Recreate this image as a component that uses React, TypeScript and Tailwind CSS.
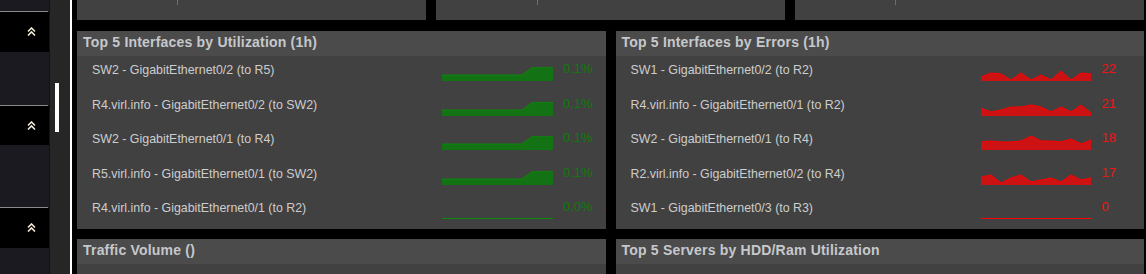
import React from "react";

type Row = { name: string; points: [number, number][]; value: string };

// sparkline points are [x, height-from-bottom] pairs, x runs 0..110
const greenRamp: [number, number][] = [
  [0, 6],
  [80, 6],
  [91, 14],
  [111, 14],
];
const flat: [number, number][] = [
  [0, 0],
  [111, 0],
];

const toPoints = (hs: number[]): [number, number][] =>
  hs.map((h, i) => [i * 10, h] as [number, number]);

const utilRows: Row[] = [
  { name: "SW2 - GigabitEthernet0/2 (to R5)", points: greenRamp, value: "0.1%" },
  { name: "R4.virl.info - GigabitEthernet0/2 (to SW2)", points: greenRamp, value: "0.1%" },
  { name: "SW2 - GigabitEthernet0/1 (to R4)", points: greenRamp, value: "0.1%" },
  { name: "R5.virl.info - GigabitEthernet0/1 (to SW2)", points: greenRamp, value: "0.1%" },
  { name: "R4.virl.info - GigabitEthernet0/1 (to R2)", points: flat, value: "0.0%" },
];

const errorRows: Row[] = [
  { name: "SW1 - GigabitEthernet0/2 (to R2)", points: toPoints([4, 8, 7, 1, 8, 1, 6, 1, 10, 1, 8, 7]), value: "22" },
  { name: "R4.virl.info - GigabitEthernet0/1 (to R2)", points: toPoints([8, 4, 6, 9, 9, 11, 9, 4, 9, 4, 11, 3]), value: "21" },
  { name: "SW2 - GigabitEthernet0/1 (to R4)", points: toPoints([8, 9, 8, 8, 9, 14, 9, 9, 8, 11, 6, 10]), value: "18" },
  { name: "R2.virl.info - GigabitEthernet0/2 (to R4)", points: toPoints([8, 10, 2, 7, 10, 3, 5, 7, 3, 10, 5, 7]), value: "17" },
  { name: "SW1 - GigabitEthernet0/3 (to R3)", points: flat, value: "0" },
];

function Spark({ points, fill, stroke }: { points: [number, number][]; fill: string; stroke: string }) {
  const H = 14;
  const line = points.map(([x, h]) => `${x},${Math.min(H - h, 13.5).toFixed(1)}`).join(" ");
  const last = points[points.length - 1][0];
  const area = `0,${H} ${line} ${last},${H}`;
  return (
    <svg width="111" height="14" viewBox="0 0 111 14" className="block mt-[11px] shrink-0">
      <polygon points={area} fill={fill} />
      <polyline points={line} fill="none" stroke={stroke} strokeWidth="1" />
    </svg>
  );
}

function Panel({ title, children }: { title: string; children?: React.ReactNode }) {
  return (
    <div className="bg-[#414141] flex flex-col h-full">
      <div className="h-[25px] bg-[#4b4b4b] flex items-center pl-[6px] pb-[2px] text-[14px] tracking-[0.2px] font-bold text-[#c6c8cb]">
        {title}
      </div>
      {children}
    </div>
  );
}

function TopList({ title, rows, fill, stroke, valueColor }: { title: string; rows: Row[]; fill: string; stroke: string; valueColor: string }) {
  return (
    <Panel title={title}>
      <div className="flex flex-col">
        {rows.map((r, i) => (
          <div key={i} className="h-[34.6px] flex pl-[15px]">
            <div className="w-[350px] pt-[6px] leading-[16px] text-[12.4px] text-[#cdcdcd]">{r.name}</div>
            <Spark points={r.points} fill={fill} stroke={stroke} />
            <div className={`ml-[10px] pt-[5px] leading-[16px] text-[13px] ${valueColor}`}>{r.value}</div>
          </div>
        ))}
      </div>
    </Panel>
  );
}

function Chevrons() {
  return (
    <svg width="9" height="9" viewBox="0 0 9 9" className="block">
      <polyline points="1,4.5 4.5,1 8,4.5" fill="none" stroke="#f2e8d6" strokeWidth="1.6" />
      <polyline points="1,8.5 4.5,5 8,8.5" fill="none" stroke="#f2e8d6" strokeWidth="1.6" />
    </svg>
  );
}

function SideBlock({ black, dark }: { black: number; dark: number }) {
  return (
    <>
      <div className="h-px bg-[#8a8a8a] w-[48px] shrink-0" />
      <div className="bg-black pl-[27px] pt-[15px] shrink-0" style={{ height: black }}>
        <Chevrons />
      </div>
      <div className="bg-[#1b1a21] shrink-0" style={{ height: dark }} />
    </>
  );
}

export default function App() {
  return (
    <div className="flex h-[274px] w-[1146px] bg-black overflow-hidden font-['Liberation_Sans',Arial,sans-serif]">
      {/* left nav */}
      <div className="w-[49px] bg-[#1b1a21] flex flex-col shrink-0 overflow-hidden">
        <div className="h-[11px] shrink-0" />
        <SideBlock black={40} dark={53} />
        <SideBlock black={39} dark={62} />
        <SideBlock black={40} dark={40} />
      </div>
      <div className="w-px bg-[#121212] shrink-0" />
      {/* scroll track */}
      <div className="w-[20px] bg-[#262626] pl-[5px] pt-[83px] shrink-0">
        <div className="w-[4px] h-[49px] bg-white" />
      </div>
      <div className="w-[2px] bg-white shrink-0" />

      <div className="flex-1 pl-[5px] pr-[2px] flex flex-col">
        <div className="grid grid-cols-3 gap-[10px] h-[20px]">
          <div className="bg-[#414141] pl-[100px]"><div className="w-px h-[5px] bg-[#6e6e6e]" /></div>
          <div className="bg-[#414141] pl-[101px]"><div className="w-px h-[5px] bg-[#6e6e6e]" /></div>
          <div className="bg-[#414141] pl-[100px]"><div className="w-px h-[5px] bg-[#6e6e6e]" /></div>
        </div>
        <div className="grid grid-cols-2 gap-[10px] mt-[11px] h-[198px]">
          <TopList
            title="Top 5 Interfaces by Utilization (1h)"
            rows={utilRows}
            fill="#137213"
            stroke="#0c880c"
            valueColor="text-[#0c7d0c]"
          />
          <TopList
            title="Top 5 Interfaces by Errors (1h)"
            rows={errorRows}
            fill="#cc1212"
            stroke="#ff0000"
            valueColor="text-[#f01414]"
          />
        </div>
        <div className="grid grid-cols-2 gap-[10px] mt-[10px] flex-1">
          <Panel title="Traffic Volume ()" />
          <Panel title="Top 5 Servers by HDD/Ram Utilization" />
        </div>
      </div>
    </div>
  );
}
